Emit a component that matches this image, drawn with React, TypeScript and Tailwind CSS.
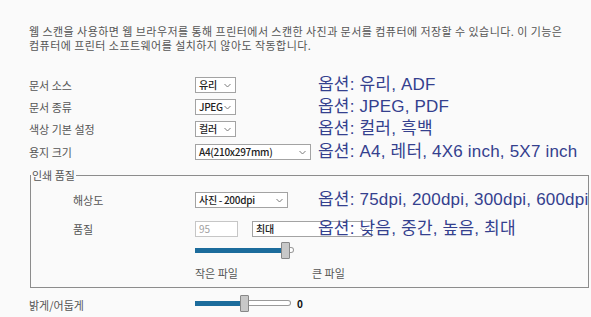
import React from 'react'

const font = "font-['Noto_Sans_CJK_KR','Noto_Sans',sans-serif]"

function Chevron() {
  return (
    <svg width="7" height="5" viewBox="0 0 7 5" className="shrink-0">
      <path d="M0.5 1l3 3 3-3" fill="none" stroke="#7a7a7a" strokeWidth="1" />
    </svg>
  )
}

function Select({ value, width }: { value: string; width: string }) {
  return (
    <div
      className={`${width} h-[16px] shrink-0 border border-[#a3a3a3] bg-white flex items-center justify-between pl-[3px] pr-[4px] text-[10px] tracking-[-0.3px] leading-none font-medium text-[#222]`}
    >
      <span className="whitespace-nowrap">{value}</span>
      <Chevron />
    </div>
  )
}

function Note({ children }: { children: React.ReactNode }) {
  return (
    <span className="shrink-0 whitespace-nowrap font-['Liberation_Sans','Noto_Sans_CJK_KR',sans-serif] text-[17px] leading-[20px] tracking-[0.2px] text-[#34408e]">
      {children}
    </span>
  )
}

function Slider({ filled, rest }: { filled: string; rest: string }) {
  return (
    <div className="flex items-center">
      <div className={`${filled} h-[5px] bg-[#1c6c9c]`} />
      <div className="w-[9px] h-[17px] bg-[#c8c8c8] border border-[#888] rounded-[1px]" />
      <div className={`${rest} h-[6px] bg-white border border-[#9a9a9a] border-l-0 rounded-r-full`} />
    </div>
  )
}

function Row({ label, children, note, labelW = 'w-[166px]' }: { label: string; children: React.ReactNode; note?: string; labelW?: string }) {
  return (
    <div className="h-[22px] flex items-center">
      <div className={`${labelW} shrink-0 text-[11px] text-[#555]`}>{label}</div>
      <div className="w-[123px] shrink-0 flex items-center">{children}</div>
      {note && <Note>{note}</Note>}
    </div>
  )
}

export default function App() {
  return (
    <div className={`w-[591px] h-[317px] overflow-hidden bg-[#fafafa] pl-[29px] pt-[24px] ${font}`}>
      {/* Intro */}
      <p className="text-[11px] leading-[14px] tracking-[0.45px] text-[#555] whitespace-nowrap">
        웹 스캔을 사용하면 웹 브라우저를 통해 프린터에서 스캔한 사진과 문서를 컴퓨터에 저장할 수 있습니다. 이 기능은
        <br />
        컴퓨터에 프린터 소프트웨어를 설치하지 않아도 작동합니다.
      </p>

      {/* Options */}
      <div className="mt-[22px]">
        <Row label="문서 소스" note="옵션: 유리, ADF">
          <Select value="유리" width="w-[41px]" />
        </Row>
        <Row label="문서 종류" note="옵션: JPEG, PDF">
          <Select value="JPEG" width="w-[41px]" />
        </Row>
        <Row label="색상 기본 설정" note="옵션: 컬러, 흑백">
          <Select value="컬러" width="w-[41px]" />
        </Row>
        <div className="mt-[1px]">
          <Row label="용지 크기" note="옵션: A4, 레터, 4X6 inch, 5X7 inch">
            <Select value="A4(210x297mm)" width="w-[116px]" />
          </Row>
        </div>
      </div>

      {/* Print quality */}
      <fieldset className="mt-[5px] ml-[1px] w-[429px] border border-[#8c8c8c] pb-[6px]">
        <legend className="px-[1px] text-[11px] leading-[14px] text-[#555]">인쇄 품질</legend>
        <div className="pl-[42px] pt-[7px]">
          <Row label="해상도" labelW="w-[122px]" note="옵션: 75dpi, 200dpi, 300dpi, 600dpi">
            <Select value="사진 - 200dpi" width="w-[93px]" />
          </Row>
          <div className="mt-[7px] h-[22px] flex items-center">
            <div className="w-[122px] shrink-0 text-[11px] text-[#555]">품질</div>
            <div className="w-[123px] shrink-0 flex items-center gap-[14px]">
              <div className="w-[43px] h-[16px] shrink-0 border border-[#c6c6c6] bg-white pl-[3px] text-[10px] leading-[14px] text-[#a0a0a0]">
                95
              </div>
              <Select value="최대" width="w-[120px]" />
            </div>
            <Note>옵션: 낮음, 중간, 높음, 최대</Note>
          </div>
          <div className="mt-[1px] h-[18px] flex items-center pl-[122px]">
            <Slider filled="w-[86px]" rest="w-[4px]" />
          </div>
          <div className="mt-[6px] h-[16px] flex items-center pl-[122px] text-[11px] text-[#555]">
            <span className="w-[117px]">작은 파일</span>
            <span>큰 파일</span>
          </div>
        </div>
      </fieldset>

      {/* Brightness */}
      <div className="mt-[5px] h-[20px] flex items-center">
        <div className="w-[166px] shrink-0 text-[11px] text-[#555] mt-[5px]">밝게/어둡게</div>
        <Slider filled="w-[45px]" rest="w-[42px]" />
        <span className="ml-[6px] text-[10px] font-bold text-[#111]">0</span>
      </div>
    </div>
  )
}
